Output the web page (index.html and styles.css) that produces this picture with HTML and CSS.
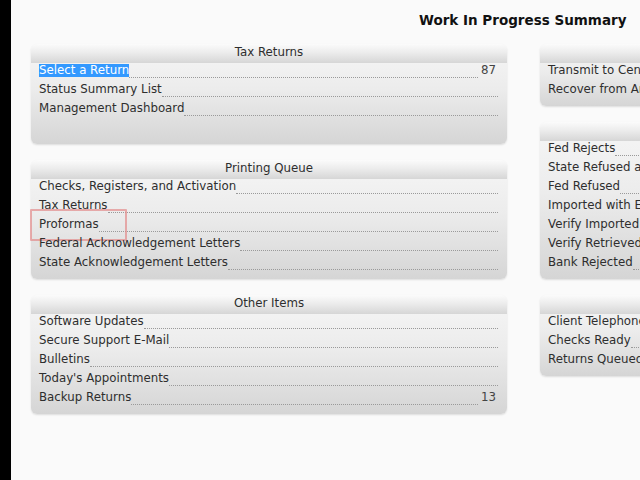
FILE: index.html
```html
<!DOCTYPE html>
<html>
<head>
<meta charset="utf-8">
<link rel="stylesheet" href="styles.css">
</head>
<body>
<div class="screen">
  <div class="strip"></div>
  <div class="main">
    <div class="title-row"><h1 class="title">Work In Progress Summary</h1></div>
    <div class="columns">
      <div class="column">
        <section class="panel">
          <div class="panel-head">Tax Returns</div>
          <div class="row"><span class="label selected">Select a Return</span><span class="leader"></span><span class="count">87</span></div>
          <div class="row"><span class="label">Status Summary List</span><span class="leader"></span></div>
          <div class="row"><span class="label">Management Dashboard</span><span class="leader"></span></div>
          <div class="row empty"></div>
        </section>
        <section class="panel">
          <div class="panel-head">Printing Queue</div>
          <div class="row"><span class="label">Checks, Registers, and Activation</span><span class="leader"></span></div>
          <div class="row"><span class="label">Tax Returns</span><span class="leader"></span></div>
          <div class="row"><span class="label">Proformas</span><span class="leader"></span><span class="mark"></span></div>
          <div class="row"><span class="label">Federal Acknowledgement Letters</span><span class="leader"></span></div>
          <div class="row"><span class="label">State Acknowledgement Letters</span><span class="leader"></span></div>
        </section>
        <section class="panel">
          <div class="panel-head">Other Items</div>
          <div class="row"><span class="label">Software Updates</span><span class="leader"></span></div>
          <div class="row"><span class="label">Secure Support E-Mail</span><span class="leader"></span></div>
          <div class="row"><span class="label">Bulletins</span><span class="leader"></span></div>
          <div class="row"><span class="label">Today's Appointments</span><span class="leader"></span></div>
          <div class="row"><span class="label">Backup Returns</span><span class="leader"></span><span class="count">13</span></div>
        </section>
      </div>
      <div class="column">
        <section class="panel">
          <div class="panel-head"></div>
          <div class="row"><span class="label">Transmit to Central Site</span><span class="leader"></span></div>
          <div class="row"><span class="label">Recover from Archive</span><span class="leader"></span></div>
        </section>
        <section class="panel">
          <div class="panel-head"></div>
          <div class="row"><span class="label">Fed Rejects</span><span class="leader"></span></div>
          <div class="row"><span class="label">State Refused and Rejected</span><span class="leader"></span></div>
          <div class="row"><span class="label">Fed Refused</span><span class="leader"></span></div>
          <div class="row"><span class="label">Imported with Errors</span><span class="leader"></span></div>
          <div class="row"><span class="label">Verify Imported Returns</span><span class="leader"></span></div>
          <div class="row"><span class="label">Verify Retrieved Returns</span><span class="leader"></span></div>
          <div class="row"><span class="label">Bank Rejected</span><span class="leader"></span></div>
        </section>
        <section class="panel">
          <div class="panel-head"></div>
          <div class="row"><span class="label">Client Telephone Messages</span><span class="leader"></span></div>
          <div class="row"><span class="label">Checks Ready</span><span class="leader"></span></div>
          <div class="row"><span class="label">Returns Queued for Transmission</span><span class="leader"></span></div>
        </section>
      </div>
    </div>
  </div>
</div>
</body>
</html>
```
FILE: styles.css
```css
html, body {
  margin: 0;
  padding: 0;
  width: 640px;
  height: 480px;
  overflow: hidden;
  background: #fafafa;
}
.screen {
  display: flex;
  width: 640px;
  height: 480px;
  overflow: hidden;
  font-family: "DejaVu Sans", Verdana, sans-serif;
  color: #2e2e2e;
}
.strip {
  flex: 0 0 11px;
  background: #000;
}
.main {
  flex: 1;
  min-width: 0;
  background: #fafafa;
  overflow: hidden;
}
.title-row {
  height: 44px;
  display: flex;
  justify-content: flex-start;
  padding-left: 408px;
}
.title {
  margin: 12px 0 0 0;
  font-size: 13.5px;
  font-weight: bold;
  line-height: 16px;
  color: #111;
  white-space: nowrap;
}
.columns {
  display: flex;
  gap: 33px;
  padding-left: 20px;
}
.column {
  flex: 0 0 476px;
  display: flex;
  flex-direction: column;
  gap: 16px;
}
.panel {
  position: relative;
  border-radius: 6px;
  padding-bottom: 5px;
  background: linear-gradient(to bottom, #f6f6f6 0%, #ececec 45%, #d5d5d5 100%);
  box-shadow: 0 1px 2px rgba(0,0,0,0.12);
}
.panel-head {
  height: 19px;
  line-height: 16px;
  text-align: center;
  font-size: 11.8px;
  color: #2e2e2e;
  border-radius: 6px 6px 0 0;
  background: linear-gradient(to bottom, #fbfbfb 0%, #ececec 45%, #d6d6d6 100%);
}
.row {
  position: relative;
  height: 19px;
  display: flex;
  align-items: flex-start;
  padding: 0 9px 0 8px;
  font-size: 11.8px;
  white-space: nowrap;
}
.label {
  line-height: 13px;
  margin-top: 1px;
  color: #2e2e2e;
}
.label.selected {
  background: #3399ff;
  color: #fff;
}
.leader {
  flex: 1;
  height: 14px;
  border-bottom: 1px dotted #9a9a9a;
}
.count {
  line-height: 13px;
  margin-top: 1px;
  padding-left: 3px;
  padding-right: 2px;
  color: #444;
}
.mark {
  position: absolute;
  left: -1px;
  top: -8px;
  width: 93px;
  height: 28px;
  border: 2px solid rgba(226, 140, 140, 0.7);
  border-radius: 1px;
  pointer-events: none;
}
```
